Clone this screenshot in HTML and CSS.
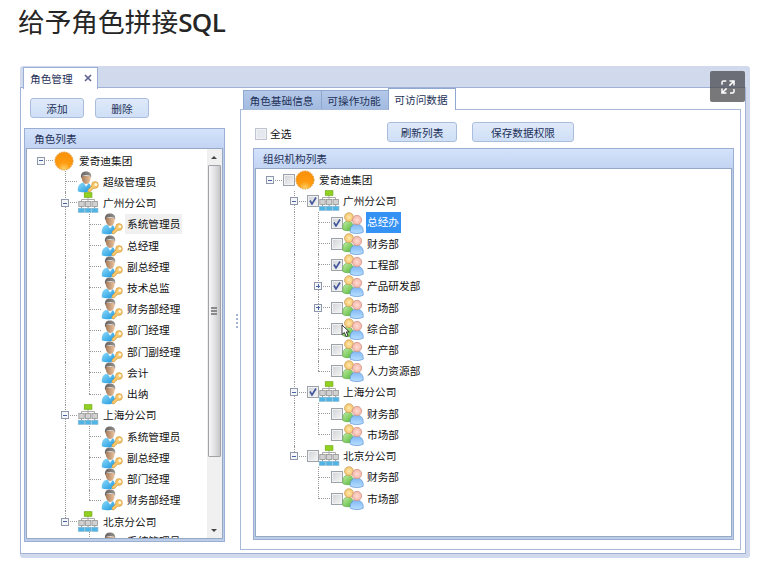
FILE: index.html
```html
<!DOCTYPE html>
<html lang="zh-CN">
<head>
<meta charset="utf-8">
<title>给予角色拼接SQL</title>
<link rel="stylesheet" href="styles.css">
</head>
<body>
<svg class="defs" width="0" height="0">
  <defs>
    <linearGradient id="blue" x1="0" y1="0" x2="1" y2="1"><stop offset="0" stop-color="#8edafa"/><stop offset="1" stop-color="#1795dd"/></linearGradient>
    <linearGradient id="skin"><stop offset="0" stop-color="#a57a5a"/><stop offset="1" stop-color="#ecc5a0"/></linearGradient>
    <linearGradient id="hair"><stop offset="0" stop-color="#66605e"/><stop offset="1" stop-color="#98948f"/></linearGradient>
    <radialGradient id="sun" cy=".95" r=".8"><stop offset="0" stop-color="#ffd268"/><stop offset=".45" stop-color="#ff9c12"/><stop offset="1" stop-color="#fb9208"/></radialGradient>
    <linearGradient id="greenBody" x1="0" y1="0" x2="1" y2="1"><stop offset="0" stop-color="#c4eea4"/><stop offset="1" stop-color="#4fb535"/></linearGradient>
    <linearGradient id="blueBody" x1="0" y1="0" x2="0" y2="1"><stop offset="0" stop-color="#7fb6f3"/><stop offset="1" stop-color="#b9e0ff"/></linearGradient>
    <radialGradient id="yellowHead"><stop offset="0" stop-color="#ffe9ae"/><stop offset="1" stop-color="#f3c26a"/></radialGradient>
    <radialGradient id="pinkHead"><stop offset="0" stop-color="#ffddd2"/><stop offset="1" stop-color="#f3b4a8"/></radialGradient>
  </defs>
  <symbol id="icon-sun" viewBox="0 0 22 22">
    <circle cx="11" cy="11" r="9" fill="url(#sun)" stroke="#dc942c" stroke-width="1" stroke-dasharray="1.600 1"/>
  </symbol>
  <symbol id="icon-user" viewBox="0 0 22 22">
    <path d="M.8 20.300C.5 15 2.500 12.300 6 11.700h5c2.300.8 3.300 4 3 7.800-3 2-9.500 2.500-13.200.8z" fill="url(#blue)"/>
    <path d="M6.500 11.500l2.600 4.200 2.700-3.700z" fill="#f3f6f8"/>
    <path d="M4.600 5c-.2 4 1.600 8 4.600 8s4.600-3.500 4.600-8z" fill="url(#skin)"/>
    <path d="M4.200 7.600C3.200 3 5 .4 9 .4c4 0 6 2.400 5 6.600l-.9-2.300c-2.200-.7-5.500-.7-7.700 0z" fill="url(#hair)"/>
    <path d="M12.300 19.500l4-4" stroke="#cf963f" stroke-width="3.200" stroke-linecap="round"/>
    <circle cx="18" cy="14" r="3.400" fill="#f6c463" stroke="#cf963f" stroke-width=".6"/>
    <path d="M12.300 19.500l4.500-4.500" stroke="#f9cb6d" stroke-width="2.200" stroke-linecap="round"/>
    <circle cx="18.800" cy="13.500" r="1.500" fill="#fff5dc"/>
  </symbol>
  <symbol id="icon-org" viewBox="0 0 22 22">
    <path d="M11 5v5M4.500 10V7.500h13V10" fill="none" stroke="#aaa" stroke-width="1"/>
    <rect x="7.300" y=".7" width="7.600" height="4.600" fill="#93d120" stroke="#73b01d" stroke-width=".8"/>
    <g fill="#d1d1d1" stroke="#959595" stroke-width=".8"><rect x="1.800" y="9.500" width="5.400" height="5"/><rect x="8.400" y="9.500" width="5.400" height="5"/><rect x="15" y="9.500" width="5.400" height="5"/></g>
    <path d="M4.500 14.500v2M11.100 14.500v2M17.700 14.500v2" stroke="#999"/>
    <g fill="#4eb5e5" stroke="#7fb3d0" stroke-width=".7"><rect x="1.300" y="16.300" width="6" height="4"/><rect x="8.100" y="16.300" width="6" height="4"/><rect x="14.900" y="16.300" width="6" height="4"/></g>
  </symbol>
  <symbol id="icon-group" viewBox="0 0 22 22">
    <path d="M.8 17.500C.4 12 2 9.500 5.500 9.200c4 0 6 2 6 8.300-3 1.600-8 1.700-10.700 0z" fill="url(#greenBody)" stroke="#63ad50" stroke-width=".7"/>
    <circle cx="7" cy="5.200" r="4.500" fill="url(#yellowHead)" stroke="#c9a060" stroke-width=".7"/>
    <path d="M8.300 20.200c-.5-5 1.500-8 6.200-8s7.100 3 6.700 8c-3.500 1.800-9.200 1.800-12.900 0z" fill="url(#blueBody)" stroke="#5f93d4" stroke-width=".7"/>
    <circle cx="15" cy="8" r="4.700" fill="url(#pinkHead)" stroke="#cb9184" stroke-width=".7"/>
  </symbol>
</svg>

<h1 class="title">给予角色拼接<b>SQL</b></h1>

<main class="window">
  <div class="window-tabs">
    <div class="window-tab">角色管理<svg class="close" viewBox="0 0 8 8"><path d="M1 1l6 6M7 1L1 7" stroke="#5f6494" stroke-width="1.700"/></svg></div>
  </div>
  <div class="workspace">
    <section class="side">
      <div class="side-actions"><button class="btn">添加</button><button class="btn">删除</button></div>
      <div class="group side-group">
        <div class="group-title">角色列表</div>
        <div class="group-body">
          <div class="tree" id="roles"></div>
          <div class="scrollbar"><i class="arrow up"></i><div class="thumb"><i></i><i></i><i></i></div><i class="arrow down"></i></div>
        </div>
      </div>
    </section>
    <div class="splitter"><i></i><i></i><i></i><i></i></div>
    <section class="detail">
      <nav class="tabs"><span class="tab tab-a">角色基础信息</span><span class="tab tab-b">可操作功能</span><span class="tab tab-c active">可访问数据</span></nav>
      <div class="page">
        <div class="toolbar">
          <label class="all"><span class="check"></span>全选</label>
          <button class="btn refresh">刷新列表</button>
          <button class="btn save">保存数据权限</button>
        </div>
        <div class="group data-group">
          <div class="group-title">组织机构列表</div>
          <div class="group-body"><div class="tree" id="orgs"></div></div>
        </div>
      </div>
    </section>
  </div>
  <div class="fullscreen"><svg viewBox="0 0 16 16"><path d="M2 5.800V3.500Q2 2 3.500 2h2.800M9.500 2H14v4.500M14 10v2.500q0 1.500-1.500 1.500H10M6.500 14H2V9.500M9.400 6.600L14 2M2 14l4.600-4.600" fill="none" stroke="#fff" stroke-width="1.500"/></svg></div>
  <svg class="cursor" viewBox="0 0 10 14"><path d="M1 1v9.500l2.400-2 1.700 4 1.900-.8-1.700-3.800h3z" fill="#fff" stroke="#222" stroke-width=".9"/></svg>
</main>
<script src="tree.js"></script>
</body>
</html>
```
FILE: styles.css
```css
* { box-sizing: border-box; }
body {
  margin: 0;
  width: 777px;
  height: 565px;
  overflow: hidden;
  background: #fff;
  color: #111;
  font: 10.67px/14px "Noto Sans CJK SC", sans-serif;
}
.defs { position: absolute; }
.title {
  margin: 0 0 0 18px;
  height: 66px;
  padding-top: 2px;
  font-size: 26.7px;
  line-height: 38px;
  font-weight: 400;
  color: #262626;
}
.title b { font-family: "Open Sans", sans-serif; font-weight: 600; font-size: 26px; letter-spacing: -.6px; }
.window {
  position: relative;
  width: 730px;
  height: 492px;
  margin-left: 20px;
  padding-right: 4px;
  border-radius: 3px;
  background: #d0daec;
}
.window-tabs { height: 21px; padding: 1px 0 0 3px; }
.window-tab {
  position: relative;
  z-index: 1;
  display: flex;
  align-items: center;
  width: 75px;
  height: 22px;
  padding-left: 6px;
  background: #fff;
  border: 1px solid #9bafd6;
  border-bottom: 0;
  color: #1e3158;
}
.close { width: 8px; height: 8px; margin: -2px 0 0 11px; }
.workspace {
  display: flex;
  height: 467px;
  background: #fff;
  border: 1px solid #9fb1d4;
}
.side { width: 204px; padding: 10px 0 0 3px; }
.side-actions { display: flex; gap: 11px; padding-left: 6px; margin-bottom: 10px; }
.btn {
  width: 54px;
  height: 20px;
  padding: 1px 0 0;
  border: 1px solid #aabddc;
  border-radius: 3px;
  background: linear-gradient(#dfeafa, #cfdff6);
  color: #1e3158;
  font: inherit;
}
.group {
  display: flex;
  flex-direction: column;
  border: 1px solid #9aafd3;
  background: #bccde8;
}
.group-title {
  flex: none;
  height: 19px;
  padding: 3px 0 0 9px;
  background: linear-gradient(#d4e2fb, #c2d4f3);
  color: #1e3158;
}
.group-body {
  flex: 1;
  display: flex;
  min-height: 0;
  margin: 0 2px 2px;
  background: #fff;
  border: 1px solid #95a8c6;
  overflow: hidden;
}
.side-group { width: 201px; height: 414px; }
.side-group .group-body { margin: 0 1px 2px; }
.tree { flex: 1; min-width: 0; padding: 1px 0 0 2px; }
.row { display: flex; align-items: center; height: 21.24px; white-space: nowrap; }
.cell {
  position: relative;
  display: flex;
  flex: none;
  align-items: center;
  justify-content: center;
  width: 24px;
  height: 100%;
}
.line::before {
  content: "";
  position: absolute;
  left: 12px;
  top: 0;
  height: 100%;
  border-left: 1px dotted #999;
}
.line.end::before { height: 50%; }
.branch::after {
  content: "";
  position: absolute;
  left: 12px;
  right: 0;
  top: 10px;
  border-top: 1px dotted #999;
}
.expander {
  position: relative;
  z-index: 1;
  width: 8px;
  height: 8px;
  border: 1px solid #8f98ab;
  background: linear-gradient(#4963a0, #4963a0) center / 4px 1px no-repeat, #f5f6fa;
}
.expander.plus {
  background: linear-gradient(#4963a0, #4963a0) center / 4px 1px no-repeat, linear-gradient(#4963a0, #4963a0) center / 1px 4px no-repeat, #f5f6fa;
}
.icon { position: relative; flex: none; width: 22px; height: 22px; }
.label { height: 20px; margin-left: 2px; padding: 3px 1px 0; }
#roles .label { padding-left: 2px; }
#roles .row:last-child .label { padding-top: 1px; }
.label.current { background: #f0f0f0; padding-right: 2px; }
.label.selected { height: 21px; background: #3592f5; color: #fff; padding-right: 2px; }
.check {
  display: flex;
  flex: none;
  width: 12px;
  height: 12px;
  border: 1px solid #9da3aa;
  background: linear-gradient(135deg, #cfd2d6, #f6f6f6);
  box-shadow: inset 0 0 0 1px #f1f1f1;
}
.row .check { margin-left: 1px; margin-right: -1px; }
.check svg { width: 10px; height: 10px; }
.scrollbar {
  display: flex;
  flex-direction: column;
  align-items: center;
  width: 15px;
  padding: 7px 1px 6px 0;
  background: #f1f0f1;
}
.arrow { border: 3px solid transparent; }
.up { border-top: 0; border-bottom-color: #444; }
.down { border-bottom: 0; border-top-color: #444; margin-top: auto; }
.thumb {
  display: flex;
  flex-direction: column;
  align-items: center;
  justify-content: center;
  gap: 1px;
  width: 13px;
  height: 292px;
  margin-top: 6px;
  border: 1px solid #a2a2a6;
  border-radius: 1px;
  background: linear-gradient(90deg, #f7f7f7, #e2e2e4 50%, #c6c6ca);
}
.thumb i { width: 6px; height: 2px; background: #8a8a8d; }
.splitter {
  display: flex;
  flex-direction: column;
  align-items: center;
  justify-content: center;
  gap: 2px;
  width: 15px;
  padding-left: 9px;
}
.splitter i { width: 2px; height: 2px; background: #a3b4d8; }
.detail { display: flex; flex-direction: column; width: 501px; }
.tabs { display: flex; align-items: flex-end; height: 21px; padding-left: 3px; }
.tab {
  height: 19px;
  padding: 3px 2px 0 0;
  border: 1px solid #8fa8d0;
  border-right-width: 0;
  border-bottom: 0;
  background: linear-gradient(#b4c8e8, #a2bbe0);
  color: #1e3158;
  text-align: center;
}
.tab-a { width: 78px; }
.tab-b { width: 67px; }
.tab-c { width: 68px; }
.tab.active {
  position: relative;
  height: 22px;
  margin-bottom: -1px;
  padding-top: 4px;
  border-right-width: 1px;
  background: #fff;
}
.page { height: 441px; padding: 12px 7px 0 12px; border: 1px solid #a8b9d9; }
.toolbar { display: flex; height: 26px; }
.all { display: flex; align-items: center; gap: 3px; width: 134px; height: 24px; padding-left: 2px; }
.all .check { border-color: #bfc3d2; background: #e6e8ef; }
.refresh { width: 70px; }
.save { width: 102px; margin-left: 15px; }
.data-group { width: 481px; height: 392px; }
.data-group .group-body { margin: 0 1px 2px; }
.data-group .tree { padding-top: .5px; }
.fullscreen {
  position: absolute;
  left: 690px;
  top: 5px;
  display: flex;
  align-items: center;
  justify-content: center;
  width: 35px;
  height: 31px;
  border-radius: 2px;
  background: rgba(68, 68, 72, .72);
}
.fullscreen svg { width: 16px; height: 16px; }
.cursor { position: absolute; left: 321px; top: 258px; width: 10px; height: 14px; }
```
FILE: tree.js
```js
// Node: [label, icon, children, options]
const user = (name, opts) => [name, 'user', null, opts];
const dept = (name, opts) => [name, 'group', null, opts];

const roles = ['爱奇迪集团', 'sun', [
  user('超级管理员'),
  ['广州分公司', 'org', [
    user('系统管理员', { state: 'current' }), user('总经理'), user('副总经理'), user('技术总监'),
    user('财务部经理'), user('部门经理'), user('部门副经理'), user('会计'), user('出纳')]],
  ['上海分公司', 'org', [user('系统管理员'), user('副总经理'), user('部门经理'), user('财务部经理')]],
  ['北京分公司', 'org', [user('系统管理员')]]
]];

const orgs = ['爱奇迪集团', 'sun', [
  ['广州分公司', 'org', [
    dept('总经办', { checked: true, state: 'selected' }), dept('财务部'), dept('工程部', { checked: true }),
    dept('产品研发部', { checked: true, plus: true }), dept('市场部', { plus: true }),
    dept('综合部'), dept('生产部'), dept('人力资源部')], { checked: true }],
  ['上海分公司', 'org', [dept('财务部'), dept('市场部')], { checked: true }],
  ['北京分公司', 'org', [dept('财务部'), dept('市场部')]]
]];

const tick = '<svg viewBox="0 0 10 10"><path d="M2 4.500l2 3.500L8 1.500" fill="none" stroke="#40559b" stroke-width="1.600"/></svg>';

function render([name, icon, children, opts = {}], checks, guides, depth, last) {
  const kind = depth ? (last ? 'line end' : 'line') : '';
  const expander = children || opts.plus ? `<i class="expander ${opts.plus ? 'plus' : ''}"></i>` : '';
  const check = checks ? `<span class="check">${opts.checked ? tick : ''}</span>` : '';
  const row = `<div class="row">${guides}<span class="cell branch ${kind}">${expander}</span>${check}` +
    `<svg class="icon"><use href="#icon-${icon}"/></svg><span class="label ${opts.state || ''}">${name}</span></div>`;
  const next = guides + `<span class="cell ${depth && !last ? 'line' : ''}"></span>`;
  return row + (children || []).map((c, i) =>
    render(c, checks, next, depth + 1, i === children.length - 1)).join('');
}

document.getElementById('roles').innerHTML = render(roles, false, '', 0, true);
document.getElementById('orgs').innerHTML = render(orgs, true, '', 0, true);
```
